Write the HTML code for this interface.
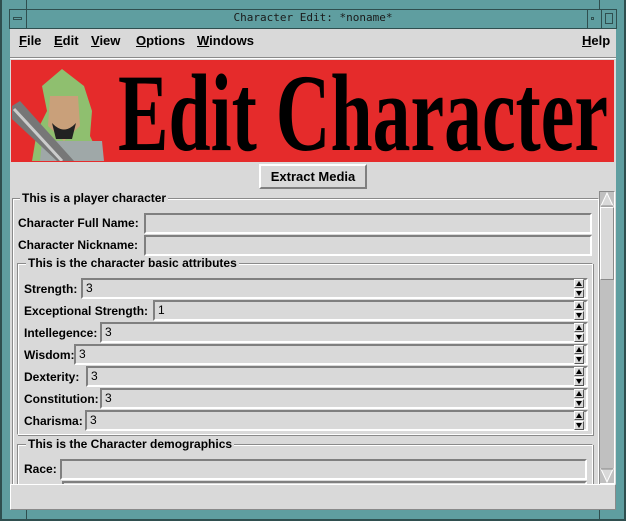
<!DOCTYPE html>
<html><head><style>
*{margin:0;padding:0;box-sizing:border-box}
body{width:626px;height:521px;background:#5f9ea0;position:relative;overflow:hidden;font-family:"Liberation Sans Narrow","Liberation Sans",sans-serif;font-weight:bold;font-size:12px;color:#000}
.a{position:absolute}
.lbl{position:absolute;white-space:nowrap;line-height:14px}
.fld{position:absolute;background:#d9d9d9;border:2px solid;border-color:#7f7f7f #fff #fff #7f7f7f;font-weight:normal;padding-left:3px;line-height:17px;font-size:12px}
.grp{position:absolute;border:1px solid;border-color:#8a8a8a #fff #fff #8a8a8a;box-shadow:inset 1px 1px 0 #fff, 1px 1px 0 #8a8a8a}
.gt{position:absolute;background:#d9d9d9;padding:0 2px;line-height:14px;white-space:nowrap}
.sp{position:absolute;width:10px;height:9px;background:#d9d9d9;border:1px solid;border-color:#fff #555 #555 #fff}
.up::after,.dn::after{content:"";position:absolute;left:1px;border-left:3px solid transparent;border-right:3px solid transparent}
.up::after{top:1px;border-bottom:5px solid #000}
.dn::after{top:1px;border-top:5px solid #000}
</style></head><body>
<div class="a" style="left:0;top:0;width:626px;height:521px;border:2px solid #2f4f4f;border-top:none"></div>
<div class="a" style="left:26px;top:0;width:1px;height:9px;background:#2f4f4f"></div>
<div class="a" style="left:599px;top:0;width:1px;height:9px;background:#2f4f4f"></div>
<div class="a" style="left:9px;top:9px;width:608px;height:20px;border:1px solid #2f4f4f;background:#5f9ea0"></div>
<div class="a" style="left:9px;top:9px;width:18px;height:20px;border-right:1px solid #2f4f4f"></div>
<div class="a" style="left:13px;top:17px;width:9px;height:3px;border:1px solid #2f4f4f"></div>
<div class="a" style="left:587px;top:9px;width:30px;height:20px;border-left:1px solid #2f4f4f"></div>
<div class="a" style="left:601px;top:9px;width:1px;height:20px;background:#2f4f4f"></div>
<div class="a" style="left:591px;top:17px;width:3px;height:3px;border:1px solid #2f4f4f"></div>
<div class="a" style="left:605px;top:13px;width:8px;height:11px;border:1px solid #2f4f4f"></div>
<div class="lbl" style="left:0;top:11px;width:626px;text-align:center;font-family:'DejaVu Sans Mono','Liberation Mono',monospace;font-weight:normal;font-size:11px;color:#1a1a1a">Character Edit: *noname*</div>
<div class="a" style="left:10px;top:29px;width:606px;height:481px;background:#d9d9d9"></div>
<div class="lbl" style="left:19px;top:34px;font-size:13px"><u>F</u>ile</div>
<div class="lbl" style="left:54px;top:34px;font-size:13px"><u>E</u>dit</div>
<div class="lbl" style="left:91px;top:34px;font-size:13px"><u>V</u>iew</div>
<div class="lbl" style="left:136px;top:34px;font-size:13px"><u>O</u>ptions</div>
<div class="lbl" style="left:197px;top:34px;font-size:13px"><u>W</u>indows</div>
<div class="lbl" style="left:582px;top:34px;font-size:13px"><u>H</u>elp</div>
<div class="a" style="left:10px;top:57px;width:606px;height:1px;background:#8a8a8a"></div>
<div class="a" style="left:10px;top:58px;width:606px;height:1px;background:#fff"></div>
<div class="a" style="left:11px;top:60px;width:603px;height:102px;background:#e52b2b"></div>
<svg class="a" style="left:12px;top:61px" width="102" height="100" viewBox="0 0 102 100">
<rect width="102" height="100" fill="#e52b2b"/>
<path d="M20 100 L25 70 L35 50 L30 25 L50 8 L72 25 L80 50 L78 75 L90 100Z" fill="#8fbf6f"/>
<path d="M38 35 L66 35 L68 65 L52 80 L36 65Z" fill="#c9a07a"/>
<path d="M40 62 Q52 75 64 62 L60 78 L44 78Z" fill="#222"/>
<path d="M30 80 L90 80 L92 100 L28 100Z" fill="#9fa8a8"/>
<path d="M0 45 L8 40 L62 100 L45 100 L0 58Z" fill="#777"/>
<path d="M2 48 L50 100" stroke="#ccc" stroke-width="3"/>
</svg>
<svg class="a" style="left:114px;top:60px" width="500" height="102">
<text x="4" y="90" textLength="490" lengthAdjust="spacingAndGlyphs" font-family="Liberation Serif, serif" font-weight="bold" font-size="110" fill="#000">Edit Character</text>
</svg>
<div class="a" style="left:259px;top:164px;width:108px;height:25px;border:2px solid;border-color:#fff #7f7f7f #7f7f7f #fff;text-align:center;line-height:21px;font-size:13px">Extract Media</div>
<!-- scrollbar -->
<div class="a" style="left:599px;top:191px;width:16px;height:293px;background:#c0c0c0;border:1px solid;border-color:#8a8a8a #fff #fff #8a8a8a"></div>
<div class="a" style="left:600px;top:207px;width:14px;height:73px;background:#d9d9d9;border:1px solid;border-color:#fff #8a8a8a #8a8a8a #fff"></div>
<svg class="a" style="left:600px;top:192px" width="14" height="15"><path d="M1 14 L7 1 L13 14Z" fill="#d9d9d9" stroke="#fff"/><path d="M13 14 L1 14" stroke="#8a8a8a"/></svg>
<svg class="a" style="left:600px;top:468px" width="14" height="15"><path d="M1 1 L13 1 L7 14Z" fill="#d9d9d9" stroke="#fff"/><path d="M1 1 L13 1" stroke="#8a8a8a"/></svg>
<div class="grp" style="left:12px;top:198px;width:587px;height:300px"></div>
<div class="gt" style="left:20px;top:191px">This is a player character</div>
<div class="lbl" style="left:18px;top:216px">Character Full Name:</div>
<div class="fld" style="left:144px;top:213px;width:448px;height:21px"></div>
<div class="lbl" style="left:18px;top:238px">Character Nickname:</div>
<div class="fld" style="left:144px;top:235px;width:448px;height:21px"></div>
<div class="grp" style="left:17px;top:263px;width:576px;height:172px"></div>
<div class="gt" style="left:26px;top:256px">This is the character basic attributes</div>

<div class="lbl" style="left:24px;top:282px">Strength:</div><div class="fld" style="left:81px;top:278px;width:507px;height:21px">3</div>
<div class="lbl" style="left:24px;top:304px">Exceptional Strength:</div><div class="fld" style="left:153px;top:300px;width:435px;height:21px">1</div>
<div class="lbl" style="left:24px;top:326px">Intellegence:</div><div class="fld" style="left:100px;top:322px;width:488px;height:21px">3</div>
<div class="lbl" style="left:24px;top:348px">Wisdom:</div><div class="fld" style="left:74px;top:344px;width:514px;height:21px">3</div>
<div class="lbl" style="left:24px;top:370px">Dexterity:</div><div class="fld" style="left:86px;top:366px;width:502px;height:21px">3</div>
<div class="lbl" style="left:24px;top:392px">Constitution:</div><div class="fld" style="left:100px;top:388px;width:488px;height:21px">3</div>
<div class="lbl" style="left:24px;top:414px">Charisma:</div><div class="fld" style="left:85px;top:410px;width:503px;height:21px">3</div>

<div class="sp up" style="left:574px;top:279px"></div><div class="sp dn" style="left:574px;top:289px"></div>
<div class="sp up" style="left:574px;top:301px"></div><div class="sp dn" style="left:574px;top:311px"></div>
<div class="sp up" style="left:574px;top:323px"></div><div class="sp dn" style="left:574px;top:333px"></div>
<div class="sp up" style="left:574px;top:345px"></div><div class="sp dn" style="left:574px;top:355px"></div>
<div class="sp up" style="left:574px;top:367px"></div><div class="sp dn" style="left:574px;top:377px"></div>
<div class="sp up" style="left:574px;top:389px"></div><div class="sp dn" style="left:574px;top:399px"></div>
<div class="sp up" style="left:574px;top:411px"></div><div class="sp dn" style="left:574px;top:421px"></div>

<div class="grp" style="left:17px;top:444px;width:576px;height:60px"></div>
<div class="gt" style="left:26px;top:437px">This is the Character demographics</div>
<div class="lbl" style="left:24px;top:462px">Race:</div>
<div class="fld" style="left:60px;top:459px;width:527px;height:21px"></div>
<div class="fld" style="left:62px;top:481px;width:525px;height:21px"></div>
<!-- status bar -->
<div class="a" style="left:10px;top:484px;width:606px;height:26px;background:#d9d9d9;border:1px solid;border-color:#fff #8a8a8a #8a8a8a #fff"></div>
<div class="a" style="left:26px;top:510px;width:1px;height:11px;background:#2f4f4f"></div>
<div class="a" style="left:599px;top:510px;width:1px;height:11px;background:#2f4f4f"></div>
</body></html>
